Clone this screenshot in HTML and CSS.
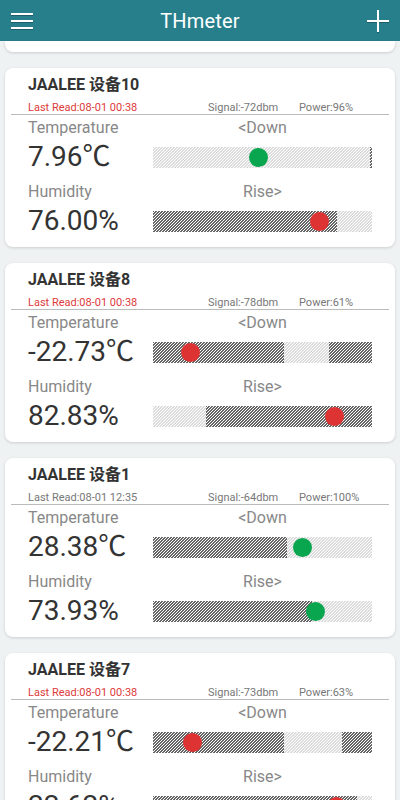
FILE: index.html
```html
<!DOCTYPE html>
<html lang="en">
  <head>
    <meta charset="UTF-8" />
    <title>THmeter</title>
    <link rel="stylesheet" href="styles.css">
  </head>
  <body>
    <header class="app-bar">
      <button class="bar-btn" aria-label="Menu">
        <svg width="22" height="18" viewBox="0 0 22 18">
          <path d="M0 2h22M0 9h22M0 16h22" stroke="#fff" stroke-width="2" />
        </svg>
      </button>
      <h1 class="app-title">THmeter</h1>
      <button class="bar-btn" aria-label="Add">
        <svg width="22" height="22" viewBox="0 0 22 22">
          <path d="M11 0v22M0 11h22" stroke="#fff" stroke-width="2" />
        </svg>
      </button>
    </header>

    <main class="device-list" id="device-list">
      <div class="card-tail"></div>
    </main>

    <script>
      // bar segments are widths in px, 219px per bar
      const devices = [
        {
          name: "JAALEE 设备10", lastRead: "08-01 00:38", stale: true,
          signal: "-72dbm", power: "96%",
          temp: "7.96℃", tempBar: [["light", 217], ["dark", 2]], tempDot: [105, "ok"],
          hum: "76.00%", humBar: [["dark", 184], ["light", 35]], humDot: [166, "alert"]
        },
        {
          name: "JAALEE 设备8", lastRead: "08-01 00:38", stale: true,
          signal: "-78dbm", power: "61%",
          temp: "-22.73℃", tempBar: [["dark", 131], ["light", 45], ["dark", 43]], tempDot: [37, "alert"],
          hum: "82.83%", humBar: [["light", 53], ["dark", 166]], humDot: [181, "alert"]
        },
        {
          name: "JAALEE 设备1", lastRead: "08-01 12:35", stale: false,
          signal: "-64dbm", power: "100%",
          temp: "28.38℃", tempBar: [["dark", 134], ["light", 85]], tempDot: [149, "ok"],
          hum: "73.93%", humBar: [["dark", 159], ["light", 60]], humDot: [162, "ok"]
        },
        {
          name: "JAALEE 设备7", lastRead: "08-01 00:38", stale: true,
          signal: "-73dbm", power: "63%",
          temp: "-22.21℃", tempBar: [["dark", 131], ["light", 58], ["dark", 30]], tempDot: [39, "alert"],
          hum: "22.62%", humBar: [["dark", 204], ["light", 15]], humDot: [183, "alert"]
        }
      ];

      function renderBar(segments, dot) {
        const bar = document.createElement("div");
        bar.className = "range-bar";
        segments.forEach(([kind, width]) => {
          const seg = document.createElement("span");
          seg.className = "seg seg-" + kind;
          seg.style.width = width + "px";
          bar.appendChild(seg);
        });
        const marker = document.createElement("span");
        marker.className = "marker marker-" + dot[1];
        marker.style.left = dot[0] - 9.5 + "px";
        bar.appendChild(marker);
        return bar;
      }

      function renderCard(d) {
        const card = document.createElement("section");
        card.className = "card";
        card.innerHTML = `
          <div class="card-head">
            <h2 class="card-title">${d.name}</h2>
            <div class="card-info">
              <span class="info-read${d.stale ? " is-stale" : ""}">Last Read:${d.lastRead}</span>
              <span class="info-signal">Signal:${d.signal}</span>
              <span class="info-power">Power:${d.power}</span>
            </div>
          </div>
          <div class="readings">
            <div class="metric-label">Temperature</div>
            <div class="trend-label">&lt;Down</div>
            <div class="metric-value">${d.temp}</div>
            <div class="bar-cell temp-bar"></div>
            <div class="metric-label">Humidity</div>
            <div class="trend-label">Rise&gt;</div>
            <div class="metric-value">${d.hum}</div>
            <div class="bar-cell hum-bar"></div>
          </div>`;
        card.querySelector(".temp-bar").appendChild(renderBar(d.tempBar, d.tempDot));
        card.querySelector(".hum-bar").appendChild(renderBar(d.humBar, d.humDot));
        return card;
      }

      const list = document.getElementById("device-list");
      devices.forEach((d) => list.appendChild(renderCard(d)));
    </script>
  </body>
</html>
```

FILE: styles.css
```css
body {
  margin: 0;
  background: #eef2f2;
  font-family: Roboto, "Noto Sans CJK SC", sans-serif;
  color: #333;
  height: 800px;
  overflow: hidden;
}

.app-bar {
  height: 41px;
  background: #277f8b;
  display: flex;
  align-items: center;
  justify-content: space-between;
  padding: 0 11px;
}

.bar-btn {
  background: none;
  border: none;
  padding: 0;
  width: 22px;
  height: 22px;
  display: flex;
  align-items: center;
  justify-content: center;
}

.bar-btn svg {
  filter: drop-shadow(0 1px 0 rgba(0, 0, 0, 0.25));
}

.app-title {
  margin: 0;
  color: #fff;
  font-size: 20px;
  font-weight: 400;
  letter-spacing: 0.2px;
}

.device-list {
  padding: 0 5px;
}

.card-tail {
  height: 11px;
  background: #fff;
  border-radius: 0 0 8px 8px;
  box-shadow: 0 1px 3px rgba(0, 0, 0, 0.15);
  margin-bottom: 16px;
}

.card {
  background: #fff;
  border-radius: 8px;
  box-shadow: 0 1px 3px rgba(0, 0, 0, 0.15);
  padding: 6px 6px 10px;
  margin-bottom: 16px;
}

.card-head {
  padding-left: 17px;
  border-bottom: 1px solid #bbb;
}

.card-title {
  margin: 0;
  font-size: 16px;
  line-height: 22px;
  font-weight: 700;
  color: #333;
}

.card-info {
  display: flex;
  margin-top: 5px;
  font-size: 11px;
  line-height: 13px;
  color: #777;
}

.info-read {
  width: 180px;
}

.info-read.is-stale {
  color: #dd3a3a;
}

.info-signal {
  width: 91px;
}

.readings {
  display: grid;
  grid-template-columns: 125px 219px;
  grid-template-rows: 26px 32px 32px 32px;
  padding-left: 17px;
}

.metric-label,
.trend-label {
  align-self: end;
  font-size: 16px;
  line-height: 26px;
  color: #888;
}

.trend-label {
  text-align: center;
}

.metric-value {
  font-size: 28px;
  line-height: 32px;
  color: #333;
  white-space: nowrap;
}

.bar-cell {
  display: flex;
  align-items: center;
}

.range-bar {
  position: relative;
  display: flex;
  width: 219px;
  height: 21px;
}

.seg {
  height: 100%;
  background-size: 3px 3px;
}

.seg-dark {
  background-image: linear-gradient(135deg, #666 25%, #fff 25% 50%, #666 50% 75%, #fff 75%);
}

.seg-light {
  background-image: linear-gradient(135deg, #dcdcdc 25%, #fff 25% 50%, #dcdcdc 50% 75%, #fff 75%);
}

.marker {
  position: absolute;
  top: 1px;
  width: 19px;
  height: 19px;
  border-radius: 50%;
}

.marker-ok {
  background: #0aa64f;
}

.marker-alert {
  background: #dd3333;
}
```
